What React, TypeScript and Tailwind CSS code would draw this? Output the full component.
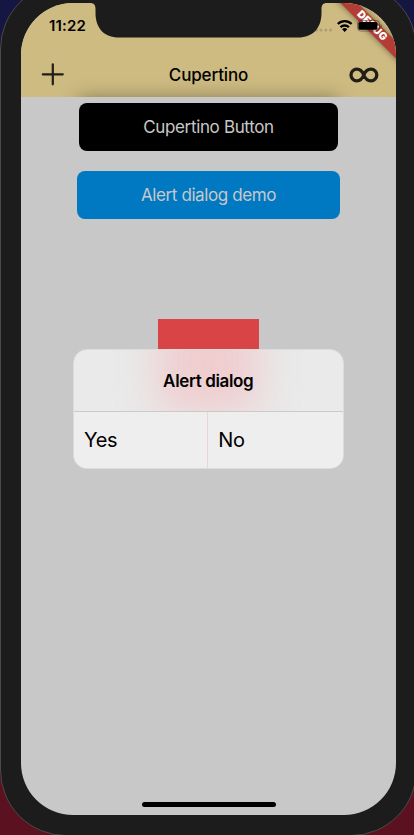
import React from "react";

function StatusIcons() {
  return (
    <svg className="absolute left-[292px] top-[14px] z-20" width="75" height="16" viewBox="313 17 75 16">
      <g fill="#b09e6f">
        <circle cx="316.5" cy="30" r="1.5" />
        <circle cx="321" cy="30" r="1.5" />
        <circle cx="325.8" cy="30" r="1.5" />
        <circle cx="330.5" cy="30" r="1.5" />
      </g>
      <g fill="none" stroke="#000" strokeWidth="2.3">
        <path d="M337.8 24a9.8 9.8 0 0 1 13.8 0" />
        <path d="M340.5 27.2a6 6 0 0 1 8.4 0" />
      </g>
      <path d="M344.7 31.9l-2.6-2.6a3.7 3.7 0 0 1 5.2 0z" fill="#000" />
      <rect x="357.5" y="20.5" width="22" height="10.5" rx="3" fill="none" stroke="#000" strokeOpacity=".35" />
      <rect x="358.4" y="22" width="19" height="7.8" rx="1.6" fill="#000" />
      <path d="M380.6 24v4a2.2 2.2 0 0 0 0-4" fill="#000" fillOpacity=".4" />
    </svg>
  );
}

function NavigationBar() {
  return (
    <header className="relative h-[94px] shrink-0 overflow-hidden bg-[#cebb82]">
      <div className="absolute left-[58px] top-[96px] h-12 w-[259px] bg-black/40 blur-[10px]" />
      <div className="relative flex h-[50px] items-start pl-[28px] pt-[15px] text-[15px] font-semibold leading-4 tracking-[0.15px]">11:22</div>
      <div className="relative grid h-11 grid-cols-[1fr_auto_1fr] items-center px-5">
        <svg width="24" height="24" viewBox="0 0 24 24" stroke="#221e15" strokeWidth="2.2" strokeLinecap="round">
          <path d="M1.8 11.3h20M11.8 1.3v20" />
        </svg>
        <h1 className="text-[17px] font-medium leading-5 tracking-[-0.15px]">Cupertino</h1>
        <svg className="-mr-[3px] justify-self-end" width="32" height="20" viewBox="0 0 32 20" fill="none" stroke="#221e15" strokeWidth="3.3">
          <path d="M16.8 10C15 5.4 12.6 4.2 9.8 4.2a5.8 5.8 0 0 0 0 11.6c2.8 0 5.2-1.2 7-5.8s4.4-5.8 7.2-5.8a5.8 5.8 0 0 1 0 11.6c-2.8 0-5.4-1.2-7.2-5.8z" />
        </svg>
      </div>
    </header>
  );
}

function AlertDialog() {
  return (
    <section className="absolute left-[52px] top-[346px] flex h-[119.5px] w-[270.5px] flex-col overflow-hidden rounded-[14px] border border-[#dcdcdc] bg-[#eaeaea]">
      <div className="relative flex h-[62px] items-center justify-center overflow-hidden border-b border-[#cbc9c9]">
        <div className="absolute -top-10 left-[84px] h-[104px] w-[100px] bg-[#f0c8ca] opacity-85 blur-[20px]" />
        <h2 className="relative pt-[1px] text-[17px] font-semibold leading-5 tracking-[-0.35px]">Alert dialog</h2>
      </div>
      <div className="grid flex-1 grid-cols-2 bg-[#eeeeee] text-[20px] leading-6">
        <button className="border-r border-[#e5d6d7] pl-[10px] pt-[1px] text-left tracking-[-0.4px]">Yes</button>
        <button className="pl-[10px] pt-[1px] text-left tracking-[-0.2px]">No</button>
      </div>
    </section>
  );
}

export default function App() {
  return (
    <main className="h-[835px] w-[414px] overflow-hidden bg-[linear-gradient(#161642_0%,#161642_30%,#5c1120_80%,#5c1120_100%)] font-['Inter','Liberation_Sans',sans-serif] text-black">
      <div className="-mt-[17px] h-[853px] w-[417px] rounded-[66px] border border-[#4a4a4a] bg-[#1c1c1c] pl-5 pt-[19px]">
        <div className="relative flex h-[812px] w-[375px] flex-col overflow-hidden rounded-[52px] bg-[#c8c8c8]">
          <NavigationBar />
          <div className="flex flex-col items-center gap-5 pt-[6px] text-[17px] leading-5 text-[#c8c8c8]">
            <button className="h-12 w-[259px] rounded-lg bg-black tracking-[-0.35px]">Cupertino Button</button>
            <button className="h-12 w-[263px] rounded-lg bg-[#0079c2] tracking-[-0.4px]">Alert dialog demo</button>
          </div>
          <div className="ml-[137px] mt-[100px] h-[100px] w-[100.5px] bg-[#d94546]" />
          <AlertDialog />
          <div className="absolute bottom-2 left-[120.5px] h-[5px] w-[134px] rounded-full bg-black" />
          <div className="absolute left-[300.5px] top-[17px] z-10 flex h-3 w-[100px] rotate-45 items-center justify-center bg-[#b33d34] text-[10.5px] font-black leading-3 tracking-[0.2px] text-white shadow-[0_0_6px_rgba(0,0,0,0.5)]">DEBUG</div>
          <StatusIcons />
          <svg className="absolute left-0 top-0 z-30" width="375" height="36" viewBox="21 3 375 36">
            <path d="M21 3H90C94 3 95.5 5 95.5 9V13C95.5 28 104 37.5 119 37.5H298C313 37.5 321.5 28 321.5 13V9C321.5 5 323 3 327 3Z" fill="#1c1c1c" />
          </svg>
        </div>
      </div>
    </main>
  );
}
